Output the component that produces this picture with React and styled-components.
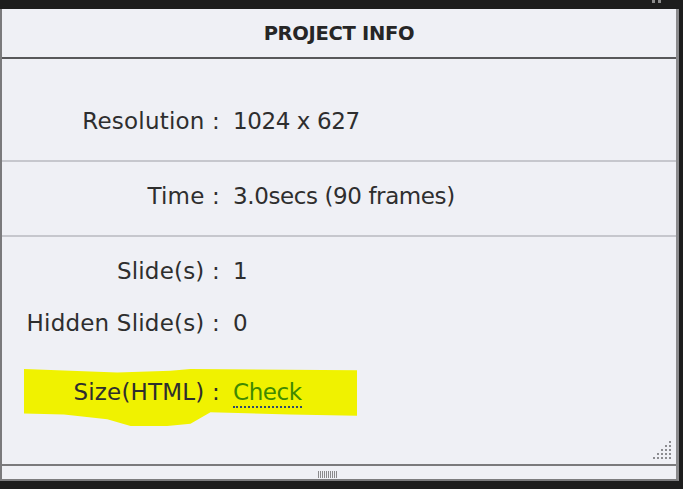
import styled, { createGlobalStyle } from 'styled-components';

const GlobalStyle = createGlobalStyle`
  html, body {
    margin: 0;
    padding: 0;
    background: #1d1d1d;
  }
  body {
    font-family: "DejaVu Sans", Verdana, sans-serif;
    height: 489px;
    overflow: hidden;
  }
`;

const Frame = styled.div`
  padding-top: 9px;
  width: 679px;
`;

const Panel = styled.div`
  background: #eff0f5;
  border-left: 2px solid #7a7a7c;
  border-right: 3px solid #8a8a8c;
  border-bottom: 2px solid #7c7c7e;
  display: flex;
  flex-direction: column;
  height: 472px;
  box-sizing: border-box;
`;

const Header = styled.div`
  height: 48px;
  display: flex;
  align-items: center;
  justify-content: center;
  border-bottom: 2px solid #58585a;
  font-weight: bold;
  font-size: 19.5px;
  color: #262626;
  letter-spacing: -0.3px;
`;

const Body = styled.div`
  flex: 1;
  display: flex;
  flex-direction: column;
  position: relative;
`;

const Section = styled.div`
  display: flex;
  flex-direction: column;
  padding: ${(p) => p.$pad};
  border-bottom: ${(p) => (p.$line ? '2px solid #c6c7cd' : 'none')};
`;

const Row = styled.div`
  display: grid;
  grid-template-columns: 218px auto;
  column-gap: 15px;
  align-items: center;
  height: 30px;
  font-size: 23px;
  color: #2e2e2e;
  position: relative;
  margin-top: ${(p) => p.$top || 0}px;

  ${(p) =>
    p.$marked &&
    `
    &::before {
      content: '';
      position: absolute;
      left: 22px;
      width: 333px;
      top: -8px;
      height: 57px;
      background: #f0f200;
      clip-path: polygon(0 0, 10% 2%, 28% 6%, 44% 3%, 50% 0, 100% 2%, 100% 82%, 80% 80%, 56% 76%, 50% 96%, 43% 100%, 32% 100%, 25% 88%, 12% 80%, 0 78%);
    }
  `}
`;

const Label = styled.span`
  text-align: right;
  white-space: nowrap;
  position: relative;
  letter-spacing: 0.2px;
`;

const Value = styled.span`
  white-space: nowrap;
  position: relative;
  margin-left: -2px;
  letter-spacing: -0.4px;
`;

const CheckLink = styled.span`
  color: #3f8a00;
  position: relative;
  border-bottom: 2px dotted #2f4a6a;
  padding-bottom: 1px;
`;

const Footer = styled.div`
  height: 13px;
  border-top: 2px solid #7a7a7c;
  display: flex;
  align-items: center;
  justify-content: center;
  padding-right: 24px;
`;

const Grip = styled.div`
  width: 19px;
  height: 7px;
  margin-top: 3px;
  background: repeating-linear-gradient(
    to right,
    #8a8a8c 0 1px,
    transparent 1px 2px
  );
`;

const ResizeCorner = styled.svg`
  position: absolute;
  right: 3px;
  bottom: 3px;
`;

const CloseMark = styled.div`
  position: absolute;
  top: 0;
  left: 652px;
  width: 12px;
  height: 3px;
  background: repeating-linear-gradient(to right, #8c8c8c 0 3px, transparent 3px 6px);
`;

const Corner = () => {
  const dots = [];
  for (let r = 0; r < 5; r++) {
    for (let c = 4 - r; c < 5; c++) {
      dots.push(<rect key={r + '-' + c} x={c * 4} y={r * 4} width="2" height="2" fill="#8c8c90" />);
    }
  }
  return (
    <ResizeCorner width="20" height="20" viewBox="0 0 20 20">
      {dots}
    </ResizeCorner>
  );
};

const App = () => {
  return (
    <>
      <GlobalStyle />
      <CloseMark />
      <Frame>
        <Panel>
          <Header>PROJECT INFO</Header>
          <Body>
            <Section $line $pad="47px 0 24px">
              <Row>
                <Label>Resolution :</Label>
                <Value>1024 x 627</Value>
              </Row>
            </Section>
            <Section $line $pad="19px 0 24px">
              <Row>
                <Label>Time :</Label>
                <Value>3.0secs (90 frames)</Value>
              </Row>
            </Section>
            <Section $pad="19px 0 0">
              <Row>
                <Label>Slide(s) :</Label>
                <Value>1</Value>
              </Row>
              <Row $top={22}>
                <Label>Hidden Slide(s) :</Label>
                <Value>0</Value>
              </Row>
              <Row $top={39} $marked>
                <Label>Size(HTML) :</Label>
                <Value>
                  <CheckLink>Check</CheckLink>
                </Value>
              </Row>
            </Section>
            <Corner />
          </Body>
          <Footer>
            <Grip />
          </Footer>
        </Panel>
      </Frame>
    </>
  );
};

export default App;
